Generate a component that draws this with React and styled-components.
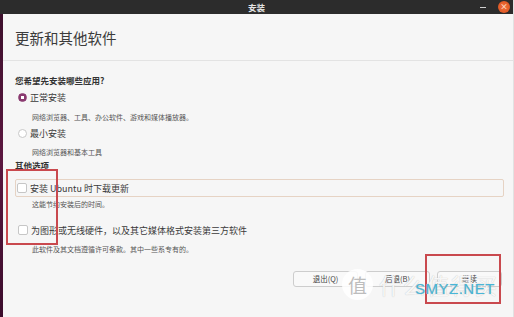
import React from 'react'
import styled, { createGlobalStyle } from 'styled-components'

const Global = createGlobalStyle`
body {
  margin: 0;
  background: #f6f6f6;
  font-family: 'Noto Sans CJK SC', 'Noto Sans', sans-serif;
}
`

const Screen = styled.div`
position: relative;
display: flex;
width: 514px;
height: 317px;
overflow: hidden;
`
const Desktop = styled.div`
width: 3px;
background: linear-gradient(#3a0f2a, #5c1740 50%, #3b0d2c);
`
const Window = styled.div`
flex: 1;
display: flex;
flex-direction: column;
background: #f6f6f6;
border-right: 1px solid #e2e2e2;
`
const TitleBar = styled.div`
position: relative;
height: 14px;
margin-left: -3px;
background: #2c2c2c;
color: #e4e4e4;
font-size: 8.5px;
font-weight: bold;
line-height: 14px;
text-align: center;
`
const WinControls = styled.div`
position: absolute;
right: 3px;
top: 1px;
display: flex;
align-items: center;
gap: 12px;
`
const Minimize = styled.span`
width: 6px;
height: 1px;
background: #cfcfcf;
`
const Close = styled.span`
width: 12px;
height: 12px;
border-radius: 50%;
background: radial-gradient(#f0703a, #d9501e);
color: #fbd2bf;
font-size: 8px;
line-height: 12px;
text-align: center;
`
const Header = styled.div`
height: 46px;
padding-left: 12px;
border-bottom: 1px solid #e3e3e3;
display: flex;
align-items: center;
font-size: 14.5px;
color: #3b3b3b;
`
const Content = styled.div`
padding: 13px 9px 0 12px;
display: flex;
flex-direction: column;
`
const Label = styled.div`
font-size: 8.5px;
font-weight: bold;
color: #333;
line-height: 12px;
margin-top: ${p => p.$mt || 0}px;
`
const Option = styled.div`
display: flex;
align-items: center;
gap: 3px;
height: ${p => p.$tall ? 18 : 14}px;
margin-top: ${p => p.$mt || 0}px;
padding-left: ${p => p.$boxed ? 1 : 2}px;
border: 1px solid ${p => p.$boxed ? '#e6d3c4' : 'transparent'};
border-radius: 2px;
font-size: 9px;
color: #3a3a3a;
box-sizing: border-box;
`
const Radio = styled.span`
width: 9px;
height: 9px;
border-radius: 50%;
box-sizing: border-box;
border: 1px solid ${p => p.$on ? '#8a3a70' : '#c8c8c8'};
background: ${p => p.$on ? 'radial-gradient(#fff 0 1.5px, #8a3a70 2px)' : '#fff'};
`
const Check = styled.span`
width: 10px;
height: 10px;
border-radius: 2px;
box-sizing: border-box;
border: 1px solid #c6c6c6;
background: #fff;
`
const Desc = styled.div`
font-size: 7px;
line-height: 10px;
color: #555;
padding-left: 17px;
margin-top: ${p => p.$mt || 0}px;
`
const Footer = styled.div`
margin-top: auto;
padding: 0 11px 30px 0;
display: flex;
justify-content: flex-end;
gap: 7px;
`
const Button = styled.button`
width: 65px;
height: 16px;
padding: 0;
border: 1px solid #cdcdcd;
border-radius: 3px;
background: #f9f9f9;
color: #444;
font-family: inherit;
font-size: 7.5px;
line-height: 14px;
`
const Mark = styled.div`
position: absolute;
border: 2px solid #c9494e;
left: ${p => p.$x}px;
top: ${p => p.$y}px;
width: ${p => p.$w}px;
height: ${p => p.$h}px;
`
const Watermark = styled.div`
position: absolute;
left: 342px;
top: 268px;
display: flex;
align-items: center;
gap: 6px;
pointer-events: none;
`
const Badge = styled.div`
width: 31px;
height: 31px;
border-radius: 50%;
background: rgba(255, 255, 255, 0.85);
color: #bdbdbd;
font-size: 19px;
line-height: 31px;
text-align: center;
`
const MarkText = styled.div`
position: relative;
font-size: 22px;
letter-spacing: 2px;
color: rgba(255, 255, 255, 0.9);
text-shadow: 0 0 1px #b8b8b8;
`
const Site = styled.div`
position: absolute;
left: 36px;
top: 12px;
font-family: 'Liberation Sans', sans-serif;
font-size: 15px;
letter-spacing: 0.5px;
color: #48b6d8;
`

export default function App() {
  return (
    <Screen>
      <Global />
      <Desktop />
      <Window>
        <TitleBar>
          安装
          <WinControls>
            <Minimize />
            <Close>×</Close>
          </WinControls>
        </TitleBar>
        <Header>更新和其他软件</Header>
        <Content>
          <Label>您希望先安装哪些应用?</Label>
          <Option $mt={4}><Radio $on />正常安装</Option>
          <Desc $mt={8}>网络浏览器、工具、办公软件、游戏和媒体播放器。</Desc>
          <Option $mt={4}><Radio />最小安装</Option>
          <Desc $mt={7}>网络浏览器和基本工具</Desc>
          <Label $mt={2}>其他选项</Label>
          <Option $boxed $tall $mt={8}><Check />安装 Ubuntu 时下载更新</Option>
          <Desc $mt={2}>这能节约安装后的时间。</Desc>
          <Option $tall $mt={12}><Check />为图形或无线硬件，以及其它媒体格式安装第三方软件</Option>
          <Desc $mt={5}>此软件及其文档遵循许可条款。其中一些系专有的。</Desc>
        </Content>
        <Footer>
          <Button>退出(Q)</Button>
          <Button>后退(B)</Button>
          <Button>继续</Button>
        </Footer>
      </Window>
      <Mark $x={6} $y={169} $w={48} $h={72} />
      <Mark $x={425} $y={254} $w={72} $h={46} />
      <Watermark>
        <Badge>值</Badge>
        <MarkText>
          什么值得买
          <Site>SMYZ.NET</Site>
        </MarkText>
      </Watermark>
    </Screen>
  )
}
